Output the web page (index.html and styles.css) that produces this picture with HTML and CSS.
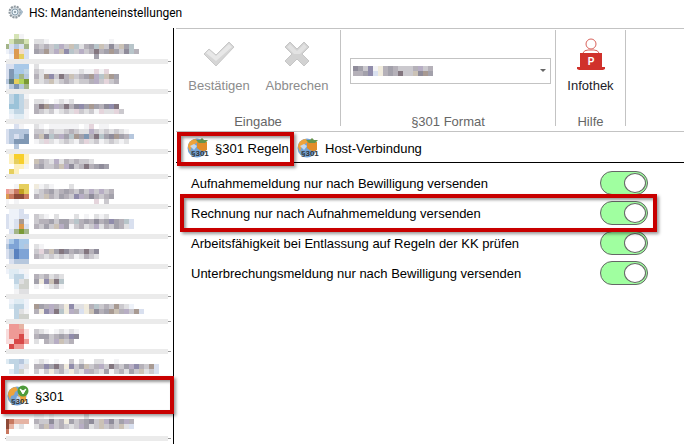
FILE: index.html
```html
<!doctype html>
<html lang="de">
    <head>
        <meta charset="utf-8">
        <title>HS: Mandanteneinstellungen</title>
        <link rel="stylesheet" href="styles.css">
    </head>
    <body>
        <header class="titlebar">
            <svg class="gear" viewBox="0 0 15 15">
                <circle cx="7" cy="7" r="5.500" fill="#d4dbe0" stroke="#8d979e" stroke-width="2" stroke-dasharray="2 1"/>
                <circle cx="7" cy="7" r="3" fill="#e8f1f7" stroke="#8aa0ae"/>
                <circle cx="7" cy="7" r="1" fill="#7d8b94"/>
                <path d="M12 5l2 2-2 3" fill="none" stroke="#a9bccb" stroke-width="2"/>
            </svg>
            <h1>HS: Mandanteneinstellungen</h1>
        </header>

        <div class="window">
            <nav class="sidebar">
                <a href="#" class="item"><svg class="mosaic"></svg></a>
                <a href="#" class="item"><svg class="mosaic"></svg></a>
                <a href="#" class="item"><svg class="mosaic"></svg></a>
                <a href="#" class="item"><svg class="mosaic"></svg></a>
                <a href="#" class="item short"><svg class="mosaic"></svg></a>
                <a href="#" class="item"><svg class="mosaic"></svg></a>
                <a href="#" class="item"><svg class="mosaic"></svg></a>
                <a href="#" class="item"><svg class="mosaic"></svg></a>
                <a href="#" class="item"><svg class="mosaic"></svg></a>
                <a href="#" class="item short"><svg class="mosaic"></svg></a>
                <a href="#" class="item"><svg class="mosaic"></svg></a>
                <a href="#" class="item plain"><svg class="mosaic"></svg></a>
                <a href="#" class="item active marked">
                    <svg class="icon" viewBox="0 0 22 22">
                        <circle cx="10" cy="11" r="9.500" fill="#74a3d6"/>
                        <path d="M1 10C1 5 5 2 9 2l2 3-3 2-1 3-3 1-1 4zM11 9l3-3 5 2v8l-4 2-3-4z" fill="#eda33c"/>
                        <path d="M10 11l3 1 1 4-3 3-2-4z" fill="#c5d9ee"/>
                        <circle cx="16" cy="6" r="5.500" fill="#4e9b3b"/>
                        <path d="M13 4l3 5 3-5-3 2z" fill="#fff" stroke="#fff"/>
                        <text x="4" y="19" class="icon-text">§301</text>
                    </svg>
                    §301
                </a>
                <a href="#" class="item last"><svg class="mosaic"></svg></a>
            </nav>

            <main>
                <div class="ribbon">
                    <section class="group eingabe">
                        <div class="tools">
                            <button type="button" disabled>
                                <svg viewBox="0 0 32 32">
                                    <path d="M1 16l5-5 7 6L26 4l5 5-18 19z" fill="#d6d6d6" stroke="#c9c9c9" stroke-linejoin="round"/>
                                    <path d="M3 15l3-3 7 6L26 6l3 3-16 14z" fill="#e8e8e8"/>
                                </svg>
                                Bestätigen
                            </button>
                            <button type="button" disabled>
                                <svg viewBox="0 0 32 32">
                                    <path d="M4 9l5-5 7 7 7-7 5 5-7 7 7 7-5 5-7-7-7 7-5-5 7-7z" fill="#d2d2d2" stroke="#c6c6c6" stroke-linejoin="round"/>
                                    <path d="M6 9l3-3 7 7 7-7 3 3-7 7H13z" fill="#e2e2e2"/>
                                </svg>
                                Abbrechen
                            </button>
                        </div>
                        <h2>Eingabe</h2>
                    </section>
                    <section class="group format">
                        <div class="combo">
                            <select aria-label="§301 Format"><option></option></select>
                            <svg class="mosaic value"></svg>
                            <i class="arrow"></i>
                        </div>
                        <h2>§301 Format</h2>
                    </section>
                    <section class="group hilfe">
                        <div class="tools">
                            <button type="button">
                                <svg viewBox="0 0 32 32">
                                    <circle cx="16" cy="6" r="5" fill="#fff" stroke="#d9635c"/>
                                    <path d="M8 15q1-3 5-3h6q4 0 5 3" fill="none" stroke="#d9635c"/>
                                    <path d="M5 15h22v14h3v2l-2 1H4l-2-1v-2h3z" fill="#d0312b"/>
                                    <text x="16" y="27" class="laptop-text">P</text>
                                </svg>
                                Infothek
                            </button>
                        </div>
                        <h2>Hilfe</h2>
                    </section>
                </div>

                <div class="tabs">
                    <a href="#" class="tab marked">
                        <svg class="icon" viewBox="0 0 22 22">
                            <circle cx="10" cy="11" r="9.500" fill="#74a3d6"/>
                            <path d="M1 10C1 5 5 2 9 2l2 3-3 2-1 3-3 1-1 4z" fill="#eda33c"/>
                            <path d="M3 9l4-2 3 2-3 4z" fill="#c5d9ee"/>
                            <path d="M10 5q5-2 10 0v8q-5 3-10-2z" fill="#e28c28"/>
                            <path d="M9 3h4l2-2 2 2h4l-3 3h-6z" fill="#67944c"/>
                            <text x="4" y="19" class="icon-text">§301</text>
                        </svg>
                        §301 Regeln
                    </a>
                    <a href="#" class="tab">
                        <svg class="icon" viewBox="0 0 22 22">
                            <circle cx="10" cy="11" r="9.500" fill="#74a3d6"/>
                            <path d="M1 10C1 5 5 2 9 2l2 3-3 2-1 3-3 1-1 4z" fill="#eda33c"/>
                            <path d="M3 9l4-2 3 2-3 4z" fill="#c5d9ee"/>
                            <path d="M10 5q5-2 10 0v8q-5 3-10-2z" fill="#e28c28"/>
                            <path d="M9 3h4l2-2 2 2h4l-3 3h-6z" fill="#67944c"/>
                            <text x="4" y="19" class="icon-text">§301</text>
                        </svg>
                        Host-Verbindung
                    </a>
                </div>

                <form class="rules">
                    <div class="rule">
                        <label for="aufnahme">Aufnahmemeldung nur nach Bewilligung versenden</label>
                        <input type="checkbox" id="aufnahme" checked>
                    </div>
                    <div class="rule marked">
                        <label for="rechnung">Rechnung nur nach Aufnahmemeldung versenden</label>
                        <input type="checkbox" id="rechnung" checked>
                    </div>
                    <div class="rule">
                        <label for="arbeit">Arbeitsfähigkeit bei Entlassung auf Regeln der KK prüfen</label>
                        <input type="checkbox" id="arbeit" checked>
                    </div>
                    <div class="rule">
                        <label for="unterbrechung">Unterbrechungsmeldung nur nach Bewilligung versenden</label>
                        <input type="checkbox" id="unterbrechung" checked>
                    </div>
                </form>
            </main>
        </div>
        <script src="mosaic.js"></script>
    </body>
</html>
```

FILE: styles.css
```css
*, *::before, *::after {
    box-sizing: border-box;
}

body {
    margin: 0;
    min-height: 100vh;
    display: flex;
    flex-direction: column;
    background: #fff;
    color: #000;
    font-family: "Liberation Sans", Arial, sans-serif;
    font-size: 13px;
    overflow: hidden;
}

a {
    color: inherit;
    text-decoration: none;
}

svg {
    display: block;
    flex: none;
}

.icon {
    width: 22px;
    height: 22px;
}

.icon-text {
    font: bold 8px "Liberation Sans", sans-serif;
    fill: #333;
}

/* title */
.titlebar {
    display: flex;
    align-items: center;
    gap: 6px;
    height: 28px;
    padding: 0 8px 3px;
}

.titlebar h1 {
    margin: 0;
    font: 12px Roboto, "Noto Sans", sans-serif;
}

.gear {
    width: 15px;
    height: 15px;
}

.window {
    flex: 1;
    display: flex;
}

/* left list */
.sidebar {
    width: 174px;
    flex: none;
    padding-top: 6px;
    border-right: 1px solid #000;
}

.item {
    position: relative;
    display: flex;
    height: 30px;
    margin: 0 5px 0 6px;
    border-bottom: 5px solid #ebebeb;
}

/* thin rule behind the band, only its ends show */
.item::after {
    content: "";
    position: absolute;
    z-index: -1;
    left: -1px;
    right: -3px;
    bottom: -3px;
    height: 1px;
    background: #999;
}

.short {
    height: 25px;
}

.plain {
    height: 22px;
    border: none;
}

.active {
    align-items: center;
    gap: 6px;
    height: 38px;
    margin: 0;
    padding: 2px 7px 0;
    border: none;
}

.last {
    height: 27px;
}

/* red frame round the current entries */
.marked {
    position: relative;
}

.marked::after {
    content: "";
    position: absolute;
    z-index: 1;
    inset: 0 -1px 0 1px;
    height: auto;
    border: 4px solid #c80000;
    background: none;
    box-shadow: 2px 2px 3px #0006, inset 2px 2px 3px #0006;
    pointer-events: none;
}

/* ribbon */
main {
    flex: 1;
    min-width: 0;
    margin-left: 2px;
}

.ribbon {
    display: flex;
    height: 104px;
    padding: 1px 0 5px;
    border-top: 1px solid #c3c3c3;
    border-bottom: 1px solid #c3c3c3;
}

.group {
    display: flex;
    flex-direction: column;
    justify-content: space-between;
    align-items: center;
    border-right: 1px solid #c3c3c3;
}

.group h2 {
    margin: 0;
    font-size: 13px;
    line-height: 8px;
    font-weight: normal;
    color: #666;
}

.eingabe {
    width: 165px;
}

.format {
    width: 215px;
}

.hilfe {
    width: 70px;
}

.tools {
    display: flex;
    padding-top: 8px;
}

.tools button {
    display: flex;
    flex-direction: column;
    align-items: center;
    gap: 6px;
    width: 78px;
    padding: 0;
    border: none;
    background: none;
    font: inherit;
    line-height: 20px;
    color: #1c1c28;
}

.hilfe button {
    width: 69px;
}

.tools button:disabled {
    color: #8c8c8c;
}

.tools svg {
    width: 32px;
    height: 32px;
}

.laptop-text {
    font: bold 10px "Liberation Sans", sans-serif;
    fill: #fff;
    text-anchor: middle;
}

.combo {
    position: relative;
    width: 201px;
    margin: 28px 0 0 4px;
}

.combo select {
    appearance: none;
    display: block;
    width: 100%;
    height: 26px;
    border: 1px solid #c3c3c3;
    border-radius: 0;
    background: #fff;
}

.value {
    position: absolute;
    left: 3px;
    top: 8px;
}

.arrow {
    position: absolute;
    right: 5px;
    top: 11px;
    border: 3px solid transparent;
    border-top-color: #666;
}

/* tabs */
.tabs {
    display: flex;
    height: 31px;
    border-bottom: 1px solid #000;
}

.tab {
    display: flex;
    align-items: center;
    gap: 6px;
    height: 34px;
    padding: 0 0 2px 11px;
}

.tab.marked {
    width: 118px;
    margin-right: -8px;
    white-space: nowrap;
}

.tab.marked::after {
    inset: 0 0 0 1px;
}

/* rules */
.rules {
    padding: 5px 0 0 5px;
}

.rule {
    display: flex;
    align-items: center;
    width: 476px;
    height: 30px;
    padding-left: 10px;
}

.rule label {
    width: 409px;
}

.rule.marked::after {
    inset: -4px 0 -4px -1px;
}

.rule input {
    appearance: none;
    width: 48px;
    height: 24px;
    margin: 0;
    padding: 1px;
    border: 1px solid #666;
    border-radius: 12px;
    background: #a0ffa0;
}

.rule input::before {
    content: "";
    display: block;
    width: 22px;
    height: 20px;
    border: 1px solid #666;
    border-radius: 50%;
    background: #fff;
}

.rule input:checked::before {
    margin-left: 22px;
}
```

FILE: mosaic.js
```js
// every letter is one 5px block
const colors = {
    a: '#f3f3f5', b: '#e0e0e2', c: '#cbc9ce', d: '#b5b1b9', e: '#a3a1ab', f: '#8f8c9a', g: '#83767f',
    t: '#cbc2b6', u: '#a89a92', v: '#b7aec4', w: '#b8c5ca', x: '#908cab', y: '#f0ebdd', p: '#e5d5dc',
    i: '#eef2f9', j: '#d9e0ef', k: '#b6c7dd', l: '#a9c9e8', m: '#7fa4d6', n: '#5a82bf', o: '#8098b4',
    G: '#a3b588', H: '#d5e3b5', I: '#b0d35a', J: '#7a9a35', K: '#5f7b7b',
    O: '#dc9a50', P: '#f2dcc8', Y: '#f7cf2c', Z: '#fdf0bd', Q: '#c4a020', S: '#e6cf5e',
    R: '#d84848', T: '#ee9a96', U: '#f8dcdc', V: '#8e4a38', W: '#c87860', X: '#e6b4a4',
    s: '#c0d5e4', r: '#dfebf3', q: '#9cc3d9', z: '#cfd1cc'
};

const items = [
    ['..Ha.', '.HGGH.bba............a', 'GjkjG.dcdcwvctwbdewtcfctew', 'ijOPj.educvtxwcvcdgdeuecfwd', '.iOSj.............e'],
    ['jjlll.b', 'jolls.cbaaaaaaabaapap', 'joqGk.dbuxcgdtcdeuvwtue', 'kKSIJ.cbctbcdcbccdvcpcd', 'ikokG'],
    ['.sqsa', '.sqsb.bba.abab', '.qqsb.dguevdgdfxeuedfxg', '.rssa.dcbcabcbpcbcapbbpc', '.irra'],
    ['..ja..ba.aaaaaa.ap.aa', 'jkkkk.ccbcbbcdcbbvcbcbcba', 'jkjko.dtfwdvewueodgwefuedk', 'jkooo.abpbabcbacpbcabcbab', '..k'],
    ['.ZYYZ', '.ZSYZ.tdcbvbdcdccb', '..ZZa.deccdtvfcdgdefe', '.SZ'],
    ['', '..aSS.yaba...b', 'TXWQS.bcdecdedcecvcvcd', 'OWVVW.dctdcedcxvdfdcde', 'a.a...............p.c'],
    ['.iij', 'jiijj.cba.b...b.a.bab', 'jijui.cddeceecwdedfdexedwj', 'jijOj.dcectveacdbcvbdcedbj', '.jGJG'],
    ['jlmll', 'kmmlk.ba', 'jknmm.cpdtegfdedgdf', 'jknmm.dcbcbcbcabdcb', '.jkkk'],
    ['irria', '.rssi.dcdbcb', '..sbz.eyxtgw', '..rzz.a.abca', '..abb'],
    ['.irri', '.rssi.uedvdcyxbbydwcdcucbi', '..sba.dyxvgwyvdjytfdeutdvcuj', '..szz'],
    ['.TTX', 'UTTTU.cba.ababa', 'UTTRU.deecdedxf', 'UURRT.b.dcvtcd', '.RTT.'],
    ['.....', 'rsskr.aba.a..c.b..bb..a', '..sjb.ddxegdyxcetcdvcgdcevxdcuj', '.rsza.cacycdbycbvdcbeacdbectbcj'],
    ['......aa.a......b', 'VWXXX.dccfcdyecdefctvfcevd', 'VXab..bdtvcdcbcvebctcdctbj', 'W']
];

const formatValue = ['fecxaydedcccdvcd', 'ddexjydedgcctfue'];

document.querySelectorAll('.sidebar .mosaic').forEach((svg, n) => draw(svg, items[n], 33, 2));
draw(document.querySelector('.value'), formatValue, 16, 0);

// cut = pixels missing at the left edge
function draw(svg, rows, columns, cut) {
    const w = columns * 5 - cut;
    const h = rows.length * 5;
    svg.setAttribute('viewBox', `${cut} 0 ${w} ${h}`);
    svg.setAttribute('width', w);
    svg.setAttribute('height', h);
    svg.setAttribute('shape-rendering', 'crispEdges');
    svg.innerHTML = rows.map((row, y) => [...row].map((c, x) => colors[c]
        ? `<rect x="${x * 5}" y="${y * 5}" width="5" height="5" fill="${colors[c]}"/>`
        : '').join('')).join('');
}
```
